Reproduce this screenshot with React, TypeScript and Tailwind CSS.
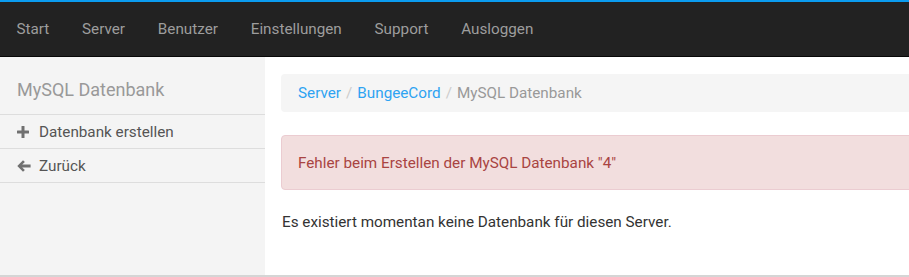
import * as React from "react";

const navItems = ["Start", "Server", "Benutzer", "Einstellungen", "Support", "Ausloggen"];

function PlusIcon() {
  return (
    <svg viewBox="0 0 12 12" className="w-[12px] h-[12px]" fill="currentColor">
      <rect x="4.5" y="0" width="3" height="12" rx="0.5" />
      <rect x="0" y="4.5" width="12" height="3" rx="0.5" />
    </svg>
  );
}

function ArrowLeftIcon() {
  return (
    <svg viewBox="0 0 14 12" className="w-[14px] h-[12px]" fill="currentColor">
      <path d="M6 0.3 L0.3 6 L6 11.7 L7.9 9.9 L5.2 7.4 H13.6 V4.6 H5.2 L7.9 2.1 Z" />
    </svg>
  );
}

export default function App() {
  return (
    <div className="w-[909px] h-[277px] overflow-hidden bg-white font-['Roboto',sans-serif] flex flex-col">
      <div className="h-[2px] bg-[#0b9cf0]" />
      <nav className="h-[55px] bg-[#222222] border-b border-[#080808] flex items-center">
        {navItems.map((item) => (
          <span key={item} className="px-[16.4px] text-[15.25px] text-[#9d9d9d] leading-[20px]">
            {item}
          </span>
        ))}
      </nav>

      <div className="flex flex-1 border-b-2 border-[#d5d5d5]">
        <aside className="w-[265px] bg-[#f4f4f4] flex flex-col">
          <h2 className="h-[58px] px-[17px] pt-[21px] text-[18px] text-[#999999] leading-[24px] border-b border-[#dddddd]">
            MySQL Datenbank
          </h2>
          <div className="h-[34px] px-[17px] flex items-center gap-[10px] border-b border-[#dddddd] text-[#555555]">
            <span className="text-[#707070]">
              <PlusIcon />
            </span>
            <span className="text-[15.25px] leading-[20px]">Datenbank erstellen</span>
          </div>
          <div className="h-[34px] px-[17px] flex items-center gap-[8px] border-b border-[#dddddd] text-[#555555]">
            <span className="text-[#707070]">
              <ArrowLeftIcon />
            </span>
            <span className="text-[15.25px] leading-[20px]">Zurück</span>
          </div>
        </aside>

        <main className="flex-1 pl-[16px] pt-[17px] -mr-[20px]">
          <div className="h-[38px] bg-[#f5f5f5] rounded-[4px] px-[17px] flex items-center text-[15.25px] leading-[20px]">
            <span className="text-[#2ea3f2]">Server</span>
            <span className="px-[5px] text-[#cccccc]">/</span>
            <span className="text-[#2ea3f2]">BungeeCord</span>
            <span className="px-[5px] text-[#cccccc]">/</span>
            <span className="text-[#999999]">MySQL Datenbank</span>
          </div>

          <div className="mt-[23px] h-[55px] bg-[#f2dede] border border-[#ebccd1] rounded-[4px] px-[16px] flex items-center text-[15.25px] text-[#a94442] leading-[20px]">
            Fehler beim Erstellen der MySQL Datenbank "4"
          </div>

          <p className="mt-[22px] pl-[1px] text-[15.25px] text-[#333333] leading-[20px]">
            Es existiert momentan keine Datenbank für diesen Server.
          </p>
        </main>
      </div>
    </div>
  );
}
